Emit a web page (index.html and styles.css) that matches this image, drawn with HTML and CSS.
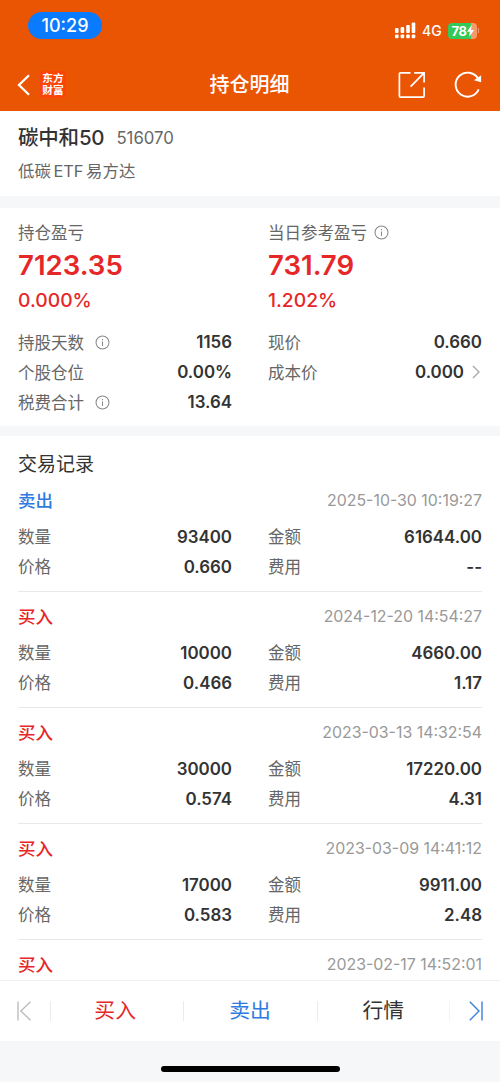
FILE: index.html
```html
<!DOCTYPE html>
<html lang="zh-CN">
<head>
  <meta charset="UTF-8" />
  <meta name="viewport" content="width=device-width, initial-scale=1.0"/>
  <title>持仓明细</title>
  <link rel="stylesheet" href="styles.css">
</head>
<body>

  <header class="header">
    <div class="status-bar">
      <span class="clock">10:29</span>
      <div class="status-icons">
        <svg class="signal" width="21" height="17" viewBox="0 0 21 17" fill="#fff">
          <rect x="0" y="6" width="3.6" height="5" rx="1"/>
          <rect x="5.6" y="5" width="3.6" height="6" rx="1"/>
          <rect x="11.2" y="3" width="3.6" height="8" rx="1"/>
          <rect x="16.7" y="0.5" width="3.6" height="10.5" rx="1"/>
          <rect x="0" y="12.6" width="3.6" height="3.6" rx="1"/>
          <rect x="5.6" y="12.6" width="3.6" height="3.6" rx="1"/>
          <rect x="11.2" y="12.6" width="3.6" height="3.6" rx="1"/>
          <rect x="16.7" y="12.6" width="3.6" height="3.6" rx="1"/>
        </svg>
        <span class="network">4G</span>
        <div class="battery">
          <span>78</span>
          <svg width="7" height="12" viewBox="0 0 7 12" fill="#fff"><path d="M4.6 0L0 6.8h2.8L2.2 12 7 4.9H4.1z"/></svg>
        </div>
        <i class="battery-cap"></i>
      </div>
    </div>

    <nav class="nav">
      <div class="nav-left">
        <svg width="14" height="22" viewBox="0 0 14 22" fill="none" stroke="#fff" stroke-width="2.3"><path d="M12 1.2L2 11l10 9.8"/></svg>
        <div class="logo"><span>东方</span><span>财富</span></div>
      </div>
      <h1>持仓明细</h1>
      <div class="nav-right">
        <svg width="28" height="28" viewBox="0 0 28 28" fill="none" stroke="#fff" stroke-width="1.7">
          <path d="M12.5 1.9H2.4Q1.4 1.9 1.4 2.9V25.1Q1.4 26.1 2.4 26.1H25.1Q26.1 26.1 26.1 25.1V16.5"/>
          <path d="M16.2 1.9H26.1V11.5M26.1 1.9L12.6 15.6"/>
        </svg>
        <svg width="28" height="28" viewBox="0 0 28 28" fill="none" stroke="#fff" stroke-width="1.9">
          <path d="M24.7 18.3A12 12 0 1 1 24 7.6"/>
          <path d="M27.1 4.3V11.3L20 9.3z" fill="#fff" stroke="none"/>
        </svg>
      </div>
    </nav>
  </header>

  <section class="stock">
    <div class="stock-name"><h2>碳中和50</h2><span>516070</span></div>
    <p>低碳 ETF 易方达</p>
  </section>

  <section class="summary">
    <div class="col">
      <div class="label">持仓盈亏</div>
      <div class="profit">7123.35</div>
      <div class="percent">0.000%</div>
      <div class="row"><span class="label">持股天数 <svg class="info" viewBox="0 0 16 16"><circle cx="8" cy="8" r="6.9"/><path d="M8 7v4.8M8 4.2v1.4"/></svg></span><b>1156</b></div>
      <div class="row"><span class="label">个股仓位</span><b>0.00%</b></div>
      <div class="row"><span class="label">税费合计 <svg class="info" viewBox="0 0 16 16"><circle cx="8" cy="8" r="6.9"/><path d="M8 7v4.8M8 4.2v1.4"/></svg></span><b>13.64</b></div>
    </div>
    <div class="col">
      <div class="label tight">当日参考盈亏 <svg class="info" viewBox="0 0 16 16"><circle cx="8" cy="8" r="6.9"/><path d="M8 7v4.8M8 4.2v1.4"/></svg></div>
      <div class="profit">731.79</div>
      <div class="percent">1.202%</div>
      <div class="row"><span class="label">现价</span><b>0.660</b></div>
      <div class="row"><span class="label">成本价</span><b class="more">0.000 <svg width="8" height="14" viewBox="0 0 8 14" fill="none" stroke="#aaa" stroke-width="1.4"><path d="M1 1l6 6-6 6"/></svg></b></div>
    </div>
  </section>

  <section class="records">
    <h3>交易记录</h3>
    <article class="record">
      <div class="record-head"><span class="sell">卖出</span><time>2025-10-30 10:19:27</time></div>
      <div class="grid">
        <div class="row"><span class="label">数量</span><b>93400</b></div>
        <div class="row"><span class="label">金额</span><b>61644.00</b></div>
        <div class="row"><span class="label">价格</span><b>0.660</b></div>
        <div class="row"><span class="label">费用</span><b>--</b></div>
      </div>
    </article>
    <article class="record">
      <div class="record-head"><span class="buy">买入</span><time>2024-12-20 14:54:27</time></div>
      <div class="grid">
        <div class="row"><span class="label">数量</span><b>10000</b></div>
        <div class="row"><span class="label">金额</span><b>4660.00</b></div>
        <div class="row"><span class="label">价格</span><b>0.466</b></div>
        <div class="row"><span class="label">费用</span><b>1.17</b></div>
      </div>
    </article>
    <article class="record">
      <div class="record-head"><span class="buy">买入</span><time>2023-03-13 14:32:54</time></div>
      <div class="grid">
        <div class="row"><span class="label">数量</span><b>30000</b></div>
        <div class="row"><span class="label">金额</span><b>17220.00</b></div>
        <div class="row"><span class="label">价格</span><b>0.574</b></div>
        <div class="row"><span class="label">费用</span><b>4.31</b></div>
      </div>
    </article>
    <article class="record">
      <div class="record-head"><span class="buy">买入</span><time>2023-03-09 14:41:12</time></div>
      <div class="grid">
        <div class="row"><span class="label">数量</span><b>17000</b></div>
        <div class="row"><span class="label">金额</span><b>9911.00</b></div>
        <div class="row"><span class="label">价格</span><b>0.583</b></div>
        <div class="row"><span class="label">费用</span><b>2.48</b></div>
      </div>
    </article>
    <article class="record">
      <div class="record-head"><span class="buy">买入</span><time>2023-02-17 14:52:01</time></div>
    </article>
  </section>

  <footer class="tabs">
    <div class="edge"><svg width="14" height="20" viewBox="0 0 14 20" fill="none" stroke="#b9b9b9" stroke-width="1.3"><path d="M1 .5v19M13.5 .8L3.8 10l9.7 9.2"/></svg></div>
    <div class="tab buy">买入</div>
    <div class="tab sell">卖出</div>
    <div class="tab">行情</div>
    <div class="edge"><svg width="14" height="20" viewBox="0 0 14 20" fill="none" stroke="#3b7fd9" stroke-width="1.4"><path d="M13 .5v19M.8 .8L10 10l-9.2 9.2"/></svg></div>
  </footer>
  <div class="home"><i></i></div>

</body>
</html>
```
FILE: styles.css
```css
* {
  box-sizing: border-box;
  margin: 0;
  padding: 0;
}

body {
  font-family: Inter, 'Noto Sans CJK SC', sans-serif;
  background: #f6f7f9;
  color: #333;
  height: 1082px;
  display: flex;
  flex-direction: column;
  overflow: hidden;
}

svg {
  display: block;
  flex: none;
}

.header {
  background: #ea5504;
  color: white;
  height: 111px;
  flex: none;
}

.status-bar {
  height: 58px;
  padding: 12px 21px 0 28px;
  display: flex;
  justify-content: space-between;
  align-items: flex-start;
}

.clock {
  width: 74px;
  height: 27px;
  line-height: 27px;
  border-radius: 14px;
  background: #0a7aff;
  text-align: center;
  font-size: 18px;
  font-weight: 500;
}

.status-icons {
  display: flex;
  align-items: center;
  margin-top: 10px;
  height: 17px;
}

.network {
  font-size: 14px;
  font-weight: 500;
  margin-left: 6px;
  width: 26px;
}

.battery {
  width: 29px;
  height: 16px;
  border-radius: 4px;
  background: linear-gradient(90deg, #34c759 78%, #f79a6c 78%);
  display: flex;
  align-items: center;
  justify-content: center;
  font-size: 13px;
  font-weight: 700;
  letter-spacing: -0.3px;
}

.battery-cap {
  width: 1px;
  height: 5px;
  margin-left: 1px;
  background: #f79a6c;
}

.nav {
  height: 53px;
  padding: 0 18px 0 17px;
  display: grid;
  grid-template-columns: 1fr auto 1fr;
  align-items: center;
}

.nav h1 {
  font-size: 20px;
  line-height: 28px;
  font-weight: 500;
  padding-top: 1px;
}

.nav-left {
  display: flex;
  align-items: center;
  gap: 9px;
}

.logo {
  width: 26px;
  height: 27px;
  border-radius: 4px;
  background: #fa4408;
  display: flex;
  flex-direction: column;
  align-items: center;
  justify-content: center;
  font-size: 10.7px;
  line-height: 12px;
  font-weight: 700;
}

.nav-right {
  display: flex;
  justify-content: flex-end;
  gap: 28px;
}

.stock {
  height: 85px;
  flex: none;
  background: white;
  padding: 11px 18px 0;
}

.stock-name {
  display: flex;
  align-items: center;
  gap: 12px;
  height: 32px;
}

.stock-name h2 {
  font-size: 20.5px;
  line-height: 30px;
  font-weight: 500;
  letter-spacing: -0.2px;
}

.stock-name span {
  font-size: 16.8px;
  color: #666;
}

.stock p {
  font-size: 16.4px;
  line-height: 35px;
  color: #666;
  word-spacing: -2px;
}

.summary {
  height: 218px;
  flex: none;
  margin-top: 12px;
  background: white;
  padding: 9px 18px 0;
  display: grid;
  grid-template-columns: 214px 214px;
  column-gap: 36px;
}

.label {
  display: flex;
  align-items: center;
  gap: 11px;
  height: 30px;
  font-size: 16.5px;
  color: #666;
}

.tight {
  gap: 7px;
}

.info {
  width: 15px;
  height: 15px;
  fill: none;
  stroke: #888;
  stroke-width: 1.1;
}

.profit {
  font-size: 27.6px;
  font-weight: 600;
  line-height: 37px;
  color: #e62728;
}

.percent {
  font-size: 19.3px;
  font-weight: 500;
  line-height: 32px;
  margin-bottom: 11px;
  color: #e62728;
}

.row {
  display: flex;
  justify-content: space-between;
  align-items: center;
  height: 30px;
}

.row b {
  font-size: 16.9px;
  font-weight: 600;
}

.row .more {
  display: flex;
  align-items: center;
  gap: 8px;
  padding-right: 2px;
}

.records {
  flex: 1;
  min-height: 0;
  overflow: hidden;
  margin-top: 10px;
  background: white;
  padding: 17px 18px 0;
}

.records h3 {
  font-size: 19px;
  font-weight: 400;
  line-height: 23px;
}

.record {
  padding: 5px 0 10px;
  border-bottom: 1px solid #e9e9e9;
}

.record-head {
  height: 38px;
  margin-bottom: 2px;
  display: flex;
  justify-content: space-between;
  align-items: center;
  font-size: 17.5px;
  font-weight: 500;
}

.record-head span {
  padding-bottom: 2px;
}

.record-head time {
  font-size: 15.9px;
  font-weight: 400;
  color: #999;
}

.grid {
  display: grid;
  grid-template-columns: 214px 214px;
  column-gap: 36px;
}

.grid b {
  padding-top: 1px;
}

.buy {
  color: #e62728;
}

.sell {
  color: #2f7be0;
}

.tabs {
  height: 61px;
  flex: none;
  background: white;
  border-top: 1px solid #f0f0f0;
  display: grid;
  grid-template-columns: 50px 1fr 1fr 1fr 50px;
  align-items: center;
}

.edge {
  display: flex;
  justify-content: center;
}

.edge:first-child {
  padding-right: 3px;
}

.edge:last-child {
  padding-left: 3px;
}

.tab {
  height: 20px;
  line-height: 20px;
  display: flex;
  align-items: center;
  justify-content: center;
  border-left: 1px solid #ebebeb;
  font-size: 20.8px;
}

.tab:nth-child(2) {
  padding-right: 4px;
}

.tab:nth-child(3) {
  padding-right: 1px;
}

.tab:nth-child(4) {
  border-right: 1px solid #f3f3f3;
}

.home {
  height: 41px;
  flex: none;
  padding-top: 25px;
}

.home i {
  display: block;
  width: 179px;
  height: 6px;
  margin: 0 auto;
  border-radius: 3px;
  background: black;
}
```
